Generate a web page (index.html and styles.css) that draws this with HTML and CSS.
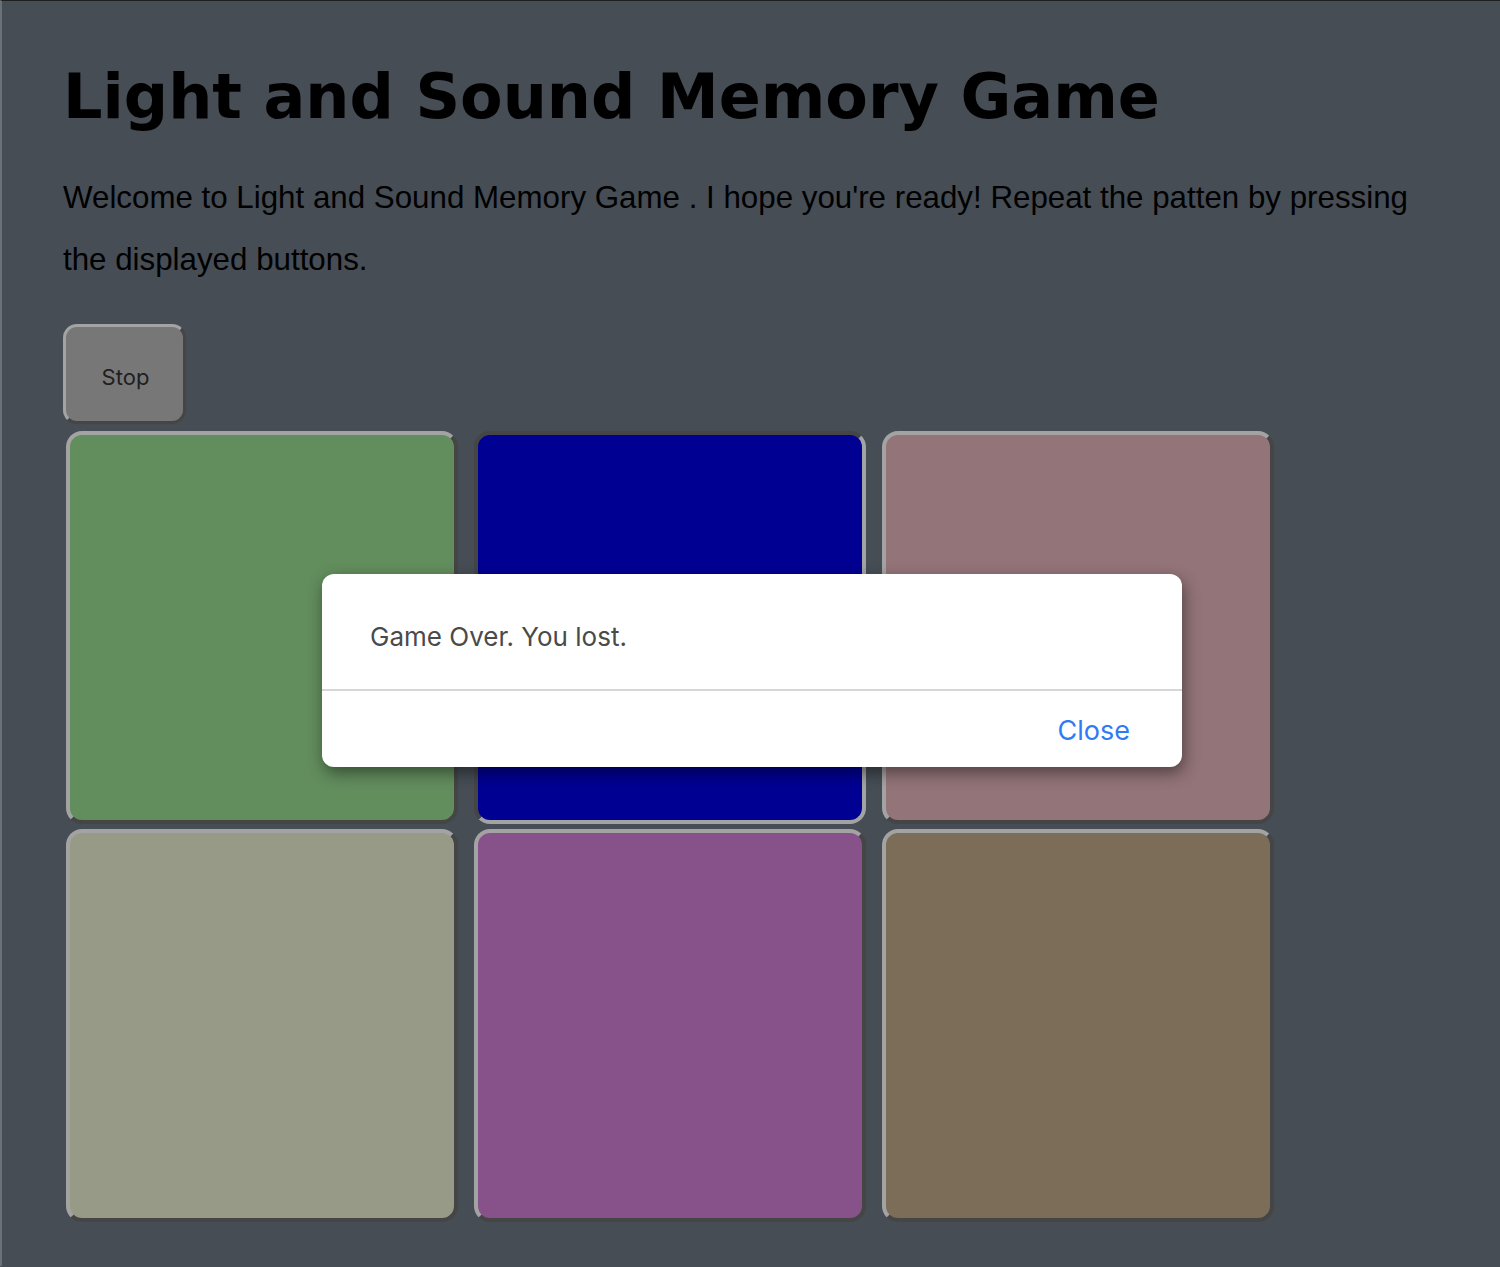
FILE: index.html
```html
<!DOCTYPE html>
<html>
<head>
<meta charset="utf-8">
<title>Light and Sound Memory Game</title>
<link rel="stylesheet" href="styles.css">
</head>
<body>
<div class="page">
  <h1 class="title">Light and Sound Memory Game</h1>
  <p class="intro">Welcome to Light and Sound Memory Game . I hope you're ready! Repeat the patten by pressing the displayed buttons.</p>
  <div class="controls">
    <button class="stop-btn">Stop</button>
  </div>
  <div class="board">
    <button class="pad pad-green"></button>
    <button class="pad pad-blue pad-lit"></button>
    <button class="pad pad-mauve"></button>
    <button class="pad pad-gray"></button>
    <button class="pad pad-purple"></button>
    <button class="pad pad-brown"></button>
  </div>
</div>
<div class="modal">
  <div class="modal-body">Game Over. You lost.</div>
  <div class="modal-footer"><span class="modal-close">Close</span></div>
</div>
</body>
</html>
```
FILE: styles.css
```css
html, body {
  margin: 0;
  padding: 0;
}
body {
  background: #464d55;
  border-top: 1px solid #1d1f22;
  border-left: 2px solid #6b7178;
  min-height: 1266px;
  box-sizing: border-box;
  position: relative;
}
.page {
  padding: 52px 0 0 61px;
}
.title {
  margin: 0;
  font-family: "DejaVu Sans", Verdana, sans-serif;
  font-weight: bold;
  font-size: 62px;
  line-height: 88px;
  color: #000;
}
.intro {
  margin: 26px 0 0 0;
  width: 1380px;
  font-family: "Liberation Sans", Arial, sans-serif;
  font-size: 31.3px;
  line-height: 62px;
  color: #000;
}
.controls {
  margin-top: 33px;
  display: flex;
}
.stop-btn {
  width: 123px;
  height: 100px;
  background: #777777;
  border-style: solid;
  border-width: 3px;
  border-color: #a3a3a3 #454545 #454545 #a3a3a3;
  border-radius: 14px;
  font-family: "Inter", "Liberation Sans", sans-serif;
  font-size: 22px;
  color: #1f1f1f;
  padding: 5px 0 0 2px;
}
.board {
  margin: 7px 0 0 3px;
  display: grid;
  grid-template-columns: repeat(3, 392px);
  grid-auto-rows: 393px;
  column-gap: 16px;
  row-gap: 5px;
}
.pad {
  border-style: solid;
  border-width: 4px;
  border-color: #a3a3a3 #454545 #454545 #a3a3a3;
  border-radius: 16px;
  padding: 0;
}
.pad-lit {
  border-color: #454545 #a3a3a3 #a3a3a3 #454545;
}
.pad-green { background: #628d5d; }
.pad-blue { background: #000093; }
.pad-mauve { background: #937478; }
.pad-gray { background: #989a88; }
.pad-purple { background: #87528a; }
.pad-brown { background: #7b6d57; }
.modal {
  position: absolute;
  left: 320px;
  top: 573px;
  width: 860px;
  background: #fff;
  border-radius: 12px;
  box-shadow: 2px 6px 16px rgba(0, 0, 0, 0.45);
  font-family: "Inter", "Liberation Sans", sans-serif;
}
.modal-body {
  height: 117px;
  padding: 10px 0 0 48px;
  box-sizing: border-box;
  display: flex;
  align-items: center;
  font-size: 26px;
  color: #4a4a4a;
  border-bottom: 2px solid #d6d6d6;
}
.modal-footer {
  height: 76px;
  padding-top: 2px;
  box-sizing: border-box;
  display: flex;
  justify-content: flex-end;
  align-items: center;
  padding-right: 52px;
}
.modal-close {
  font-size: 27px;
  color: #2f7bf5;
}
```
